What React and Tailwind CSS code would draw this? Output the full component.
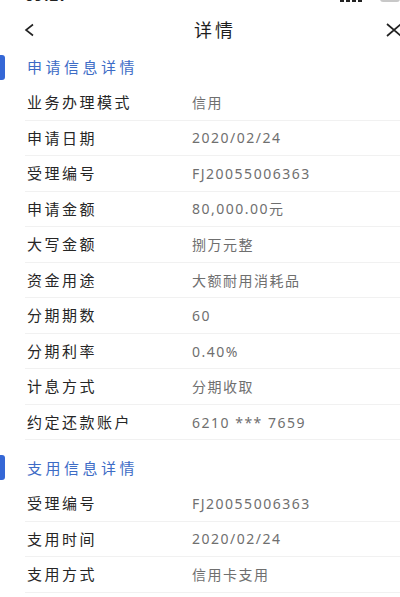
import React from 'react';

const applyRows = [
  ['业务办理模式', '信用'],
  ['申请日期', '2020/02/24'],
  ['受理编号', 'FJ20055006363'],
  ['申请金额', '80,000.00元'],
  ['大写金额', '捌万元整'],
  ['资金用途', '大额耐用消耗品'],
  ['分期期数', '60'],
  ['分期利率', '0.40%'],
  ['计息方式', '分期收取'],
  ['约定还款账户', '6210 *** 7659'],
];

const useRows = [
  ['受理编号', 'FJ20055006363'],
  ['支用时间', '2020/02/24'],
  ['支用方式', '信用卡支用'],
];

function SectionHeader({ title, top }) {
  return (
    <div className={`${top ? 'h-[45px]' : 'h-[45.5px]'} flex items-center relative`}>
      <div className="absolute left-0 top-[15px] w-[5px] h-[25px] bg-[#3567d6] rounded-r-[3px]" />
      <span className="pl-[27px] pt-[10px] text-[15px] tracking-[3.5px] text-[#3d6cc6]">{title}</span>
    </div>
  );
}

function Row({ label, value }) {
  return (
    <div className="h-[35.56px] ml-[25px] flex items-center border-b border-[#f1f1f1]">
      <span className="w-[167px] pl-[2px] text-[15px] tracking-[2.5px] text-[#262626]">{label}</span>
      <span className="text-[14px] tracking-[1.5px] text-[#6f6f6f]">{value}</span>
    </div>
  );
}

export default function App() {
  return (
    <div
      className="w-[400px] h-[597px] bg-white overflow-hidden"
      style={{ fontFamily: '"Noto Sans", "Noto Sans CJK SC", sans-serif' }}
    >
      {/* status bar, mostly cut off */}
      <div className="h-[20px] overflow-hidden">
        <div className="mt-[-12px] h-[15px] flex items-center justify-between pl-[25px] text-[15px] leading-[15px] font-bold text-[#222]">
          <span className="tracking-[1px]">09:27</span>
          <div className="flex items-center gap-[6px]">
            <div className="flex items-end gap-[2px]">
              <div className="w-[4px] h-[6px] bg-[#222]" />
              <div className="w-[4px] h-[8px] bg-[#222]" />
              <div className="w-[4px] h-[10px] bg-[#222]" />
              <div className="w-[4px] h-[12px] bg-[#222]" />
            </div>
            <div className="w-[6px] h-[6px] bg-[#222] rounded-full" />
            <div className="w-[20px] h-[12px] bg-[#c8c8c8] rounded-[3px]" />
          </div>
        </div>
      </div>

      {/* nav bar */}
      <div className="h-[20px] flex items-center justify-between relative">
        <svg className="ml-[24px]" width="11" height="14" viewBox="0 0 11 14">
          <path d="M9 1.5 L2 7 L9 12.5" fill="none" stroke="#222" strokeWidth="1.6" />
        </svg>
        <span className="absolute left-0 right-0 text-center pl-[30px] text-[18px] leading-[20px] tracking-[3px] text-[#1e1e1e]">详情</span>
        <svg className="mr-[-2px]" width="17" height="14" viewBox="0 0 17 14">
          <path d="M2 1 L16 13 M16 1 L2 13" fill="none" stroke="#222" strokeWidth="1.7" />
        </svg>
      </div>

      <SectionHeader title="申请信息详情" top />
      {applyRows.map(([l, v], i) => (
        <Row key={i} label={l} value={v} />
      ))}

      <SectionHeader title="支用信息详情" />
      {useRows.map(([l, v], i) => (
        <Row key={i} label={l} value={v} />
      ))}
    </div>
  );
}
